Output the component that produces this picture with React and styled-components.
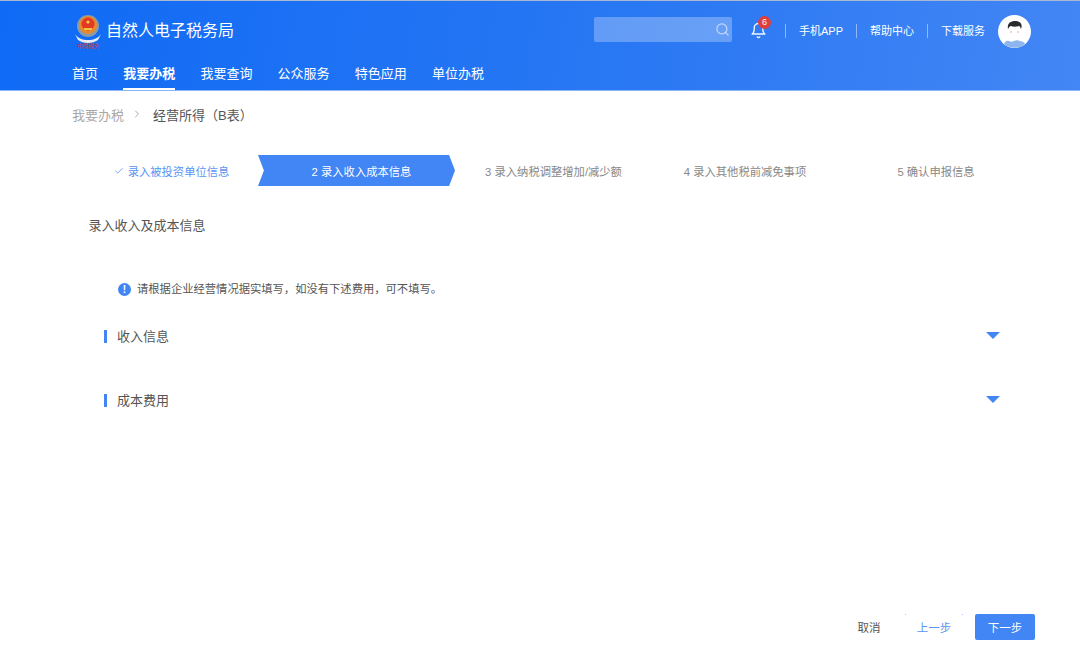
import React from 'react';
import styled, { createGlobalStyle } from 'styled-components';
import { FiCheck, FiChevronRight, FiSearch, FiBell } from 'react-icons/fi';

const GlobalStyle = createGlobalStyle`
  html, body {
    margin: 0;
    padding: 0;
    background: #fff;
    font-family: "Liberation Sans", "Noto Sans CJK SC", sans-serif;
  }
`;

const NAV_ITEMS = ['首页', '我要办税', '我要查询', '公众服务', '特色应用', '单位办税'];
const TOP_LINKS = ['手机APP', '帮助中心', '下载服务'];
const STEPS = [
  { label: '录入被投资单位信息', width: 186, state: 'done' },
  { label: '2 录入收入成本信息', width: 197, state: 'active' },
  { label: '3 录入纳税调整增加/减少额', width: 197 },
  { label: '4 录入其他税前减免事项', width: 186 },
  { label: '5 确认申报信息', width: 196 },
];

function Emblem() {
  return (
    <svg width="32" height="36" viewBox="0 0 32 36">
      <path d="M3 21c3 4 7 6 13 6s10-2 13-6l-3 6c-3 2-6 3-10 3s-7-1-10-3z" fill="#e8edf5" />
      <circle cx="16" cy="13" r="11" fill="#8d9aa8" />
      <circle cx="16" cy="12" r="9" fill="#e8892b" />
      <circle cx="16" cy="11" r="6.5" fill="#e23a22" />
      <path d="M12 15h8v2h-8z" fill="#f3c53c" />
      <circle cx="16" cy="9" r="1.6" fill="#f3d24c" />
      <text x="16" y="35" textAnchor="middle" fontSize="5.5" fill="#e0301e" fontFamily="'Noto Sans CJK SC', sans-serif">中国税务</text>
    </svg>
  );
}

function Face() {
  return (
    <svg width="33" height="33" viewBox="0 0 33 33">
      <circle cx="16.5" cy="16.5" r="16.5" fill="#fff" />
      <path d="M10 14c-1-5 2-8 7-8s8 3 6 8c-1-2-1-3-2-3-3 1-6 1-8 0-1 0-2 1-3 3z" fill="#2b2b2f" />
      <circle cx="13" cy="17" r="1" fill="#f0c8c0" />
      <circle cx="20" cy="17" r="1" fill="#f0c8c0" />
      <path d="M6 29c1-3 3-4 5-3 2 1 3 1 5 0s4-1 6 0 4 0 5 3a16.5 16.5 0 0 1-21 0z" fill="#8fb5ee" />
    </svg>
  );
}

export default function App() {
  return (
    <Page>
      <GlobalStyle />
      <Header>
        <TopRow>
          <Brand>
            <Emblem />
            <BrandName>自然人电子税务局</BrandName>
          </Brand>
          <SearchBox>
            <FiSearch size={15} />
          </SearchBox>
          <Bell>
            <FiBell size={17} />
            <Badge>6</Badge>
          </Bell>
          {TOP_LINKS.map((link) => (
            <TopLink key={link}>{link}</TopLink>
          ))}
          <Avatar>
            <Face />
          </Avatar>
        </TopRow>
        <Nav>
          {NAV_ITEMS.map((item) => (
            <NavItem key={item} $active={item === '我要办税'}>{item}</NavItem>
          ))}
        </Nav>
      </Header>

      <Main>
        <Breadcrumb>
          <CrumbLink>我要办税</CrumbLink>
          <FiChevronRight size={12} color="#aaa" />
          <CrumbCurrent>经营所得（B表）</CrumbCurrent>
        </Breadcrumb>

        <Steps>
          {STEPS.map((step) => (
            <Step key={step.label} $width={step.width} $state={step.state}>
              {step.state === 'done' && <FiCheck size={10} />}
              {step.label}
            </Step>
          ))}
        </Steps>

        <SectionTitle>录入收入及成本信息</SectionTitle>

        <Notice>
          <NoticeIcon>!</NoticeIcon>
          请根据企业经营情况据实填写，如没有下述费用，可不填写。
        </Notice>

        <Group>
          <GroupName>收入信息</GroupName>
          <Caret />
        </Group>
        <Group>
          <GroupName>成本费用</GroupName>
          <Caret />
        </Group>
      </Main>

      <Footer>
        <CancelButton>取消</CancelButton>
        <PrevButton>上一步</PrevButton>
        <NextButton>下一步</NextButton>
      </Footer>
    </Page>
  );
}

const Page = styled.div`
  display: flex;
  flex-direction: column;
  height: 648px;
  overflow: hidden;
`;

const Header = styled.header`
  height: 91px;
  box-sizing: border-box;
  padding: 0 49px 0 72px;
  display: flex;
  flex-direction: column;
  color: #fff;
  background: linear-gradient(100deg, #0f6af5 0%, #2a78f3 60%, #4386f5 100%);
  border-top: 1px solid #a9b9d3;
  border-bottom: 1px solid #8fb6f7;
`;

const TopRow = styled.div`
  display: flex;
  align-items: center;
  height: 59px;
`;

const Brand = styled.div`
  display: flex;
  align-items: center;
  gap: 2px;
  margin-right: auto;
`;

const BrandName = styled.span`
  font-size: 16px;
  margin-bottom: 4px;
`;

const SearchBox = styled.div`
  width: 138px;
  height: 25px;
  box-sizing: border-box;
  padding-right: 2px;
  margin-right: 2px;
  margin-bottom: 2px;
  display: flex;
  align-items: center;
  justify-content: flex-end;
  border-radius: 2px;
  background: rgba(255, 255, 255, 0.28);
  color: rgba(255, 255, 255, 0.6);
`;

const Bell = styled.div`
  position: relative;
  display: flex;
  margin-left: 16px;
  margin-right: 18px;
  opacity: 0.92;
`;

const Badge = styled.span`
  position: absolute;
  top: -6px;
  left: 8px;
  width: 13px;
  height: 13px;
  border-radius: 50%;
  background: #ee3a2c;
  font-size: 9px;
  line-height: 13px;
  text-align: center;
`;

const TopLink = styled.a`
  font-size: 11px;
  line-height: 14px;
  padding-left: 13px;
  margin-right: 13px;
  border-left: 1px solid rgba(255, 255, 255, 0.45);
  white-space: nowrap;
`;

const Avatar = styled.div`
  display: flex;
  margin-top: 1px;
`;

const Nav = styled.nav`
  display: flex;
  gap: 25.2px;
  flex: 1;
`;

const NavItem = styled.a`
  font-size: 13px;
  font-weight: ${(p) => (p.$active ? 700 : 400)};
  line-height: 23px;
  margin-top: 2px;
  height: 28px;
  box-sizing: border-box;
  border-bottom: 2px solid ${(p) => (p.$active ? '#fff' : 'transparent')};
`;

const Main = styled.main`
  flex: 1;
  display: flex;
  flex-direction: column;
  padding: 0 80px 0 72px;
`;

const Breadcrumb = styled.div`
  display: flex;
  align-items: center;
  gap: 7px;
  height: 46px;
  font-size: 13px;
`;

const CrumbLink = styled.span`
  color: #a8a8a8;
`;

const CrumbCurrent = styled.span`
  color: #555;
  margin-left: 3px;
`;

const Steps = styled.div`
  display: flex;
  height: 31px;
  margin-top: 18px;
`;

const Step = styled.div`
  flex: none;
  width: ${(p) => p.$width}px;
  box-sizing: border-box;
  padding-left: ${(p) => (p.$state ? (p.$state === 'done' ? 13 : 10) : 0)}px;
  display: flex;
  align-items: center;
  justify-content: center;
  gap: 4px;
  font-size: 11.3px;
  white-space: nowrap;
  color: ${(p) => (p.$state === 'done' ? '#5b93f3' : '#888')};
  ${(p) => p.$state === 'active' && `
    color: #fff;
    background: #4285f4;
    clip-path: polygon(0 0, 97% 0, 100% 50%, 97% 100%, 0 100%, 3% 50%);
  `}
`;

const SectionTitle = styled.h2`
  margin: 31px 0 0 16.5px;
  font-size: 13px;
  font-weight: 400;
  line-height: 18px;
  color: #555;
`;

const Notice = styled.p`
  display: flex;
  align-items: center;
  gap: 6px;
  margin: 45px 0 6px 46px;
  font-size: 11.3px;
  line-height: 18px;
  color: #555;
`;

const NoticeIcon = styled.span`
  width: 13px;
  height: 13px;
  border-radius: 50%;
  background: #4285f4;
  color: #fff;
  font-size: 10px;
  font-weight: 700;
  line-height: 13px;
  text-align: center;
`;

const Group = styled.div`
  display: flex;
  align-items: center;
  justify-content: space-between;
  height: 64px;
  margin-left: 32px;
`;

const GroupName = styled.span`
  padding-left: 10px;
  font-size: 13px;
  line-height: 13px;
  color: #555;
  border-left: 3px solid #4285f4;
`;

const Caret = styled.span`
  width: 0;
  height: 0;
  margin-bottom: 1px;
  border-style: solid;
  border-width: 7px 7px 0;
  border-color: #4285f4 transparent transparent;
`;

const Footer = styled.footer`
  display: flex;
  align-items: center;
  justify-content: flex-end;
  padding: 0 45px 8px 0;
`;

const FooterButton = styled.button`
  height: 26px;
  padding: 0;
  border: 0;
  background: none;
  font-family: inherit;
  font-size: 11.5px;
`;

const CancelButton = styled(FooterButton)`
  width: 24px;
  color: #555;
`;

const PrevButton = styled(FooterButton)`
  position: relative;
  width: 58px;
  margin: 0 12px 0 24px;
  color: #5b93f3;
  &::before,
  &::after {
    content: '';
    position: absolute;
    top: 0;
    width: 1px;
    height: 1px;
    background: #a9c6f8;
  }
  &::before {
    left: 0;
  }
  &::after {
    right: 0;
  }
`;

const NextButton = styled(FooterButton)`
  width: 60px;
  border-radius: 2px;
  background: #4285f4;
  color: #fff;
`;
